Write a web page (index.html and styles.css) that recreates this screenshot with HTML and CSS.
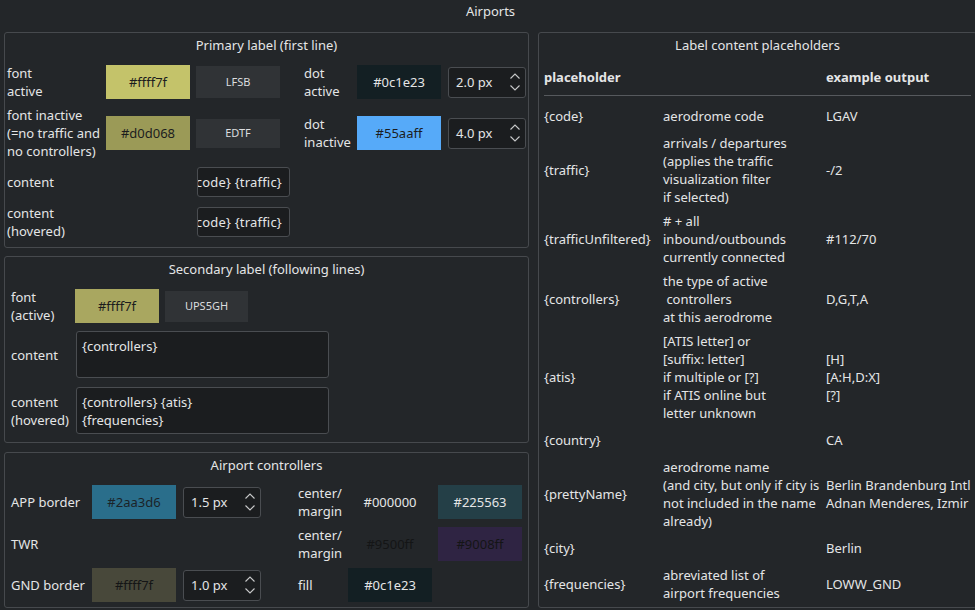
FILE: index.html
```html
<!DOCTYPE html>
<html>
<head>
<meta charset="utf-8">
<link rel="stylesheet" href="styles.css">
</head>
<body>
<div class="page">
  <div class="title">Airports</div>
  <div class="main">
    <div class="left">
      <section class="group primary">
        <div class="gtitle">Primary label (first line)</div>
        <div class="rows">
          <div class="row r1">
            <div class="lbl w-pl">font<br>active</div>
            <div class="swatch sw-y1 dark">#ffff7f</div>
            <div class="preview p1">LFSB</div>
            <div class="lbl w-dot">dot<br>active</div>
            <div class="swatch sw-0c light">#0c1e23</div>
            <div class="spin ml7"><span>2.0 px</span><svg class="arrows" width="12" height="20" viewBox="0 0 12 20"><path d="M1.5 6.5 L6 2 L10.5 6.5 M1.5 13.5 L6 18 L10.5 13.5" fill="none" stroke="#c8c9ca" stroke-width="1.1"/></svg></div>
          </div>
          <div class="row r2">
            <div class="lbl w-pl">font inactive<br>(=no traffic and<br>no controllers)</div>
            <div class="swatch sw-y2 dark">#d0d068</div>
            <div class="preview p2">EDTF</div>
            <div class="lbl w-dot">dot<br>inactive</div>
            <div class="swatch sw-blue dark">#55aaff</div>
            <div class="spin ml7"><span>4.0 px</span><svg class="arrows" width="12" height="20" viewBox="0 0 12 20"><path d="M1.5 6.5 L6 2 L10.5 6.5 M1.5 13.5 L6 18 L10.5 13.5" fill="none" stroke="#c8c9ca" stroke-width="1.1"/></svg></div>
          </div>
          <div class="row r3">
            <div class="lbl w-content">content</div>
            <div class="lineedit"><span>{code} {traffic}</span></div>
          </div>
          <div class="row r4">
            <div class="lbl w-content">content<br>(hovered)</div>
            <div class="lineedit"><span>{code} {traffic}</span></div>
          </div>
        </div>
      </section>

      <section class="group secondary">
        <div class="gtitle">Secondary label (following lines)</div>
        <div class="rows rows2">
          <div class="row s1">
            <div class="lbl w-sl">font<br>(active)</div>
            <div class="swatch sw-y3 dark">#ffff7f</div>
            <div class="preview p3">UPS5GH</div>
          </div>
          <div class="row s2">
            <div class="lbl w-sl">content</div>
            <div class="textarea">{controllers}</div>
          </div>
          <div class="row s3">
            <div class="lbl w-sl">content<br>(hovered)</div>
            <div class="textarea">{controllers} {atis}<br>{frequencies}</div>
          </div>
        </div>
      </section>

      <section class="group controllers">
        <div class="gtitle">Airport controllers</div>
        <div class="rows rows3">
          <div class="row c1">
            <div class="lbl w-cl">APP border</div>
            <div class="swatch sw-app dark2">#2aa3d6</div>
            <div class="spin ml7"><span>1.5 px</span><svg class="arrows" width="12" height="20" viewBox="0 0 12 20"><path d="M1.5 6.5 L6 2 L10.5 6.5 M1.5 13.5 L6 18 L10.5 13.5" fill="none" stroke="#c8c9ca" stroke-width="1.1"/></svg></div>
            <div class="lbl w-cm ml37">center/<br>margin</div>
            <div class="swatch sw-none light">#000000</div>
            <div class="swatch sw-225 light ml6">#225563</div>
          </div>
          <div class="row c2">
            <div class="lbl w-cl">TWR</div>
            <div class="spacer-sw"></div>
            <div class="spacer-spin ml7"></div>
            <div class="lbl w-cm ml37">center/<br>margin</div>
            <div class="swatch sw-none dark3">#9500ff</div>
            <div class="swatch sw-900 dark3 ml6">#9008ff</div>
          </div>
          <div class="row c3">
            <div class="lbl w-cl">GND border</div>
            <div class="swatch sw-gnd dark3">#ffff7f</div>
            <div class="spin ml7"><span>1.0 px</span><svg class="arrows" width="12" height="20" viewBox="0 0 12 20"><path d="M1.5 6.5 L6 2 L10.5 6.5 M1.5 13.5 L6 18 L10.5 13.5" fill="none" stroke="#c8c9ca" stroke-width="1.1"/></svg></div>
            <div class="lbl w-cm ml37">fill</div>
            <div class="swatch sw-0c light">#0c1e23</div>
          </div>
        </div>
      </section>
    </div>

    <section class="group right">
      <div class="gtitle">Label content placeholders</div>
      <div class="thead">
        <div class="th">placeholder</div>
        <div class="th"></div>
        <div class="th">example output</div>
      </div>
      <div class="tbody">
        <div class="tr h30"><div>{code}</div><div>aerodrome code</div><div>LGAV</div></div>
        <div class="tr h78"><div>{traffic}</div><div>arrivals / departures<br>(applies the traffic<br>visualization filter<br>if selected)</div><div>-/2</div></div>
        <div class="tr h60"><div>{trafficUnfiltered}</div><div># + all<br>inbound/outbounds<br>currently connected</div><div>#112/70</div></div>
        <div class="tr h60"><div>{controllers}</div><div>the type of active<br>&nbsp;controllers<br>at this aerodrome</div><div>D,G,T,A</div></div>
        <div class="tr h96"><div>{atis}</div><div>[ATIS letter] or<br>[suffix: letter]<br>if multiple or [?]<br>if ATIS online but<br>letter unknown</div><div>[H]<br>[A:H,D:X]<br>[?]</div></div>
        <div class="tr h30"><div>{country}</div><div></div><div>CA</div></div>
        <div class="tr h78"><div>{prettyName}</div><div>aerodrome name<br>(and city, but only if city is<br>not included in the name<br>already)</div><div>Berlin Brandenburg Intl<br>Adnan Menderes, Izmir</div></div>
        <div class="tr h30"><div>{city}</div><div></div><div>Berlin</div></div>
        <div class="tr h42"><div>{frequencies}</div><div>abreviated list of<br>airport frequencies</div><div>LOWW_GND</div></div>
      </div>
    </section>
  </div>
</div>
</body>
</html>
```

FILE: styles.css
```css
* { box-sizing: border-box; }
html, body {
  margin: 0;
  padding: 0;
  background: #232629;
  overflow: hidden;
}
body {
  font-family: "Noto Sans", "Open Sans", sans-serif;
  font-size: 13px;
  line-height: 18px;
  color: #e4e5e6;
  width: 975px;
  height: 610px;
}
.page { width: 975px; height: 610px; }
.title {
  height: 23px;
  line-height: 22px;
  text-align: center;
  padding-left: 6px;
}
.main {
  display: flex;
  gap: 9px;
  padding-left: 4px;
  margin-top: 9px;
  width: 990px;
}
.left {
  display: flex;
  flex-direction: column;
  width: 525px;
  flex: none;
}
.group {
  border: 1px solid #46494d;
  border-radius: 3px;
}
.gtitle {
  text-align: center;
  padding-top: 3px;
  height: 21px;
}
.primary { height: 216px; padding: 0 2px; }
.secondary { height: 187px; margin-top: 8px; padding: 0 6px; }
.controllers { height: 156px; margin-top: 9px; padding: 0 6px; }

.rows { display: flex; flex-direction: column; }
.primary .rows { margin-top: 10px; gap: 7px; }
.rows2 { margin-top: 10px; }
.rows3 { margin-top: 10px; }

.row { display: flex; align-items: center; }
.r1 { height: 36px; }
.r2 { height: 54px; margin-top: -1px; }
.r3 { height: 30px; }
.r4 { height: 36px; }

.lbl { flex: none; }
.w-pl { width: 99px; }
.w-dot { width: 53px; margin-left: 24px; }
.w-content { width: 190px; }
.w-sl { width: 64px; }
.w-cl { width: 81px; }
.w-cm { width: 50px; }
.ml7 { margin-left: 7px; }
.ml6 { margin-left: 6px; }
.ml37 { margin-left: 37px; }

.swatch {
  flex: none;
  width: 84px;
  height: 34px;
  display: flex;
  align-items: center;
  justify-content: center;
}
.dark { color: #1c1d1e; }
.dark2 { color: #1b2328; }
.dark3 { color: #141516; }
.light { color: #e4e5e6; }
.sw-y1 { background: #c4c36a; }
.sw-y2 { background: #9b9a57; }
.sw-y3 { background: #a9a760; }
.sw-0c { background: #131f23; }
.sw-blue { background: #56aaf9; }
.sw-app { background: #2a6e8b; }
.sw-none { background: transparent; }
.sw-225 { background: #243f47; }
.sw-900 { background: #2f2443; }
.sw-gnd { background: #48483a; }
.spacer-sw { width: 84px; flex: none; }
.spacer-spin { width: 78px; flex: none; }

.preview {
  flex: none;
  width: 84px;
  margin-left: 6px;
  background: #303336;
  display: flex;
  align-items: center;
  justify-content: center;
  font-size: 11px;
  color: #dcdddf;
}
.p1 { height: 32px; }
.p2 { height: 29px; }
.p3 { height: 31px; width: 83px; }

.spin {
  flex: none;
  width: 78px;
  height: 31px;
  border: 1px solid #4a4d51;
  border-radius: 3px;
  background: #1b1d1f;
  display: flex;
  align-items: center;
  justify-content: space-between;
  padding: 0 4px 0 7px;
}
.arrows { display: block; }

.lineedit {
  flex: none;
  width: 93px;
  height: 30px;
  border: 1px solid #4a4d51;
  border-radius: 3px;
  background: #1b1d1f;
  display: flex;
  align-items: center;
  justify-content: flex-end;
  overflow: hidden;
  white-space: nowrap;
  padding-right: 7px;
}
.lineedit span { flex: none; letter-spacing: 0.2px; }

.s1 { height: 36px; }
.s2 { height: 47px; margin-top: 7px; }
.s3 { height: 47px; margin-top: 9px; }
.textarea {
  flex: none;
  width: 253px;
  height: 47px;
  margin-left: 1px;
  border: 1px solid #4a4d51;
  border-radius: 3px;
  background: #1b1d1f;
  padding: 5px 5px;
}

.c1, .c2, .c3 { height: 34px; }
.c1 { margin-top: 1px; }
.c2 { margin-top: 8px; }
.c3 { margin-top: 7px; }

.right {
  width: 439px;
  height: 576px;
  flex: none;
  padding: 0 5px;
}
.thead {
  display: grid;
  grid-template-columns: 119px 163px 1fr;
  height: 38px;
  margin-top: 4px;
  align-items: center;
  font-weight: bold;
  border-bottom: 1px solid #56595d;
  width: 427px;
}
.tbody {
  padding-top: 5px;
  width: 427px;
}
.tr {
  display: grid;
  grid-template-columns: 119px 163px 1fr;
  align-items: center;
  white-space: nowrap;
}
.h30 { height: 30px; }
.h42 { height: 42px; }
.h60 { height: 60px; }
.h78 { height: 78px; }
.h96 { height: 96px; }
```
